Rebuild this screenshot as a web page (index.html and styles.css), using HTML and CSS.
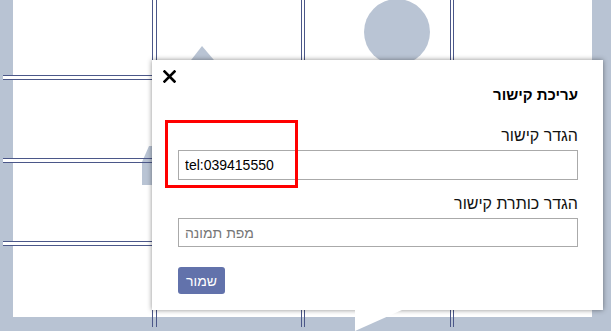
FILE: index.html
```html
<!DOCTYPE html>
<html lang="he">
<head>
    <meta charset="UTF-8">
    <meta name="viewport" content="width=device-width, initial-scale=1.0">
    <title>עריכת קישור</title>
    <link rel="stylesheet" href="styles.css">
</head>
<body>
    <div class="board">
        <svg class="picture" width="611" height="331" viewBox="0 0 611 331">
            <circle cx="397" cy="32" r="33" fill="#b9c4d4"/>
            <polygon points="202,46 248,100 160,100" fill="#b9c4d4"/>
            <polygon points="149,146 142,162 142,185 153,185 153,146" fill="#b9c4d4"/>
        </svg>
        <div class="col col-first">
            <div class="cell cell-top"></div>
            <div class="cell"></div>
            <div class="cell"></div>
            <div class="cell cell-last"></div>
        </div>
        <div class="col col-second"></div>
        <div class="col col-third"></div>
        <div class="col col-fourth"></div>

        <div class="modal" dir="rtl">
            <button class="close" aria-label="סגור">
                <svg width="13" height="13" viewBox="0 0 13 13">
                    <path d="M1.5 1.5 L11.5 11.5 M11.5 1.5 L1.5 11.5" stroke="#000" stroke-width="2.6" stroke-linecap="square"/>
                </svg>
            </button>
            <h2 class="modal-title">עריכת קישור</h2>
            <label class="field-label" for="link">הגדר קישור</label>
            <input class="field" id="link" type="text" dir="ltr" value="tel:039415550">
            <label class="field-label label-second" for="linkTitle">הגדר כותרת קישור</label>
            <input class="field field-second" id="linkTitle" type="text" dir="ltr" placeholder="מפת תמונה">
            <div class="actions" dir="ltr">
                <button class="save">שמור</button>
            </div>
        </div>
        <div class="tail"></div>
        <div class="highlight"></div>
    </div>
</body>
</html>
```

FILE: styles.css
```css
body {
    margin: 0;
    background: #fff;
    font-family: "Liberation Sans", Arial, sans-serif;
}
.board {
    position: relative;
    display: flex;
    width: 611px;
    height: 331px;
    padding-left: 3px;
    box-sizing: border-box;
    overflow: hidden;
    background: linear-gradient(#fff, #fff) 13px 0 / 579px 317px no-repeat, #b8c3d3;
}
.picture {
    position: absolute;
    left: 0;
    top: 0;
}
.col {
    position: relative;
    height: 327px;
    border-left: 1px solid #4b5789;
    border-right: 1px solid #4b5789;
    flex-shrink: 0;
}
.col-first {
    width: 149px;
    border-left: none;
    display: flex;
    flex-direction: column;
    gap: 3px;
    background: linear-gradient(to right, #fff 10px, transparent 10px) 0 0 / 100% 317px no-repeat;
}
.col-second {
    width: 144px;
    margin-left: 3px;
}
.col-third {
    width: 145px;
    margin-left: 2px;
}
.col-fourth {
    width: 160px;
    margin-left: 2px;
    border-right: none;
}
.cell {
    height: 78px;
    border-top: 1px solid #4b5789;
    border-bottom: 1px solid #4b5789;
    background: linear-gradient(to right, #b8c3d3 10px, transparent 10px);
}
.cell-top {
    height: 75px;
    border-top: none;
}
.cell-last {
    height: 72px;
    border-bottom: none;
    flex-shrink: 0;
}
.modal {
    position: absolute;
    left: 152px;
    top: 60px;
    width: 451px;
    height: 250px;
    box-sizing: border-box;
    padding: 10px 25px 0 26px;
    background: #fff;
    box-shadow: 0 0 5px rgba(0, 0, 0, 0.45);
    display: flex;
    flex-direction: column;
    z-index: 2;
}
.close {
    align-self: flex-end;
    margin-left: -15px;
    width: 13px;
    height: 13px;
    padding: 0;
    border: none;
    background: none;
    display: flex;
}
.modal-title {
    margin: 3px 0 0;
    font-size: 15px;
    line-height: 18px;
    font-weight: bold;
    color: #000;
}
.field-label {
    margin-top: 22px;
    font-size: 16px;
    line-height: 19px;
    color: #111;
}
.label-second {
    margin-top: 14px;
}
.field {
    margin-top: 5px;
    height: 30px;
    box-sizing: border-box;
    border: 1px solid #aaa;
    padding: 0 6px;
    font-family: "Liberation Sans", Arial, sans-serif;
    font-size: 14px;
    color: #000;
    text-align: left;
    outline: none;
}
.field-second {
    height: 29px;
}
.field::placeholder {
    color: #777;
}
.actions {
    margin-top: 20px;
}
.save {
    height: 27px;
    width: 47px;
    padding: 0;
    border: none;
    border-radius: 3px;
    background: #6272ab;
    color: #fff;
    font-family: "Liberation Sans", Arial, sans-serif;
    font-size: 14px;
}
.tail {
    position: absolute;
    left: 355px;
    top: 310px;
    width: 0;
    height: 0;
    border-top: 21px solid #fff;
    border-right: 47px solid transparent;
    z-index: 2;
}
.highlight {
    position: absolute;
    left: 165px;
    top: 120px;
    width: 127px;
    height: 62px;
    border: 3px solid #f00;
    z-index: 3;
}
```
